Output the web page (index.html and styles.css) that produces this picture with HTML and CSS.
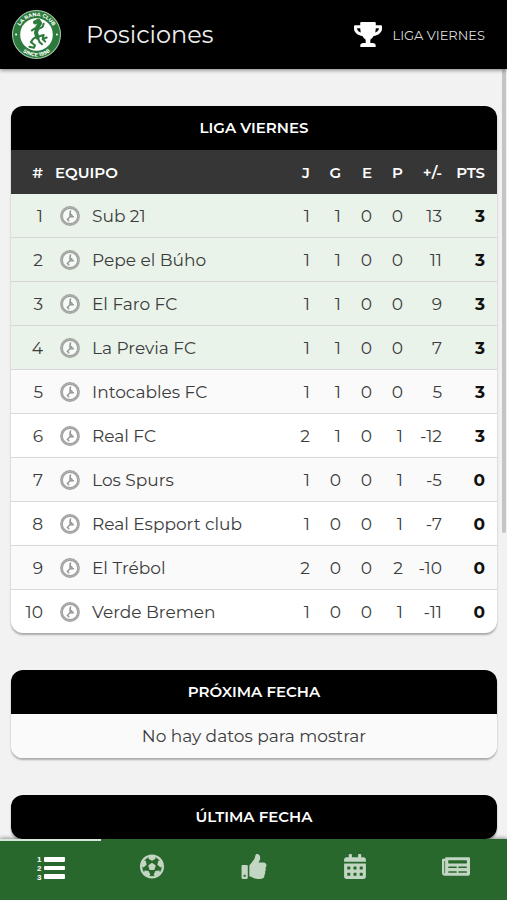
FILE: index.html
```html
<!DOCTYPE html>
<html lang="es">
<head>
<meta charset="utf-8">
<meta name="viewport" content="width=device-width, initial-scale=1">
<title>Posiciones</title>
<link rel="stylesheet" href="styles.css">
</head>
<body>
<header class="topbar">
  <svg class="crest" viewBox="0 0 100 100" aria-hidden="true">
    <defs>
      <path id="arc-top" d="M14 50a36 36 0 0 1 72 0"/>
      <path id="arc-bottom" d="M7 50a43 43 0 0 0 86 0"/>
    </defs>
    <circle cx="50" cy="50" r="47" fill="#2c7a3c" stroke="#a9cbb0" stroke-width="2"/>
    <circle cx="50" cy="50" r="32" fill="#fff"/>
    <text class="crest-text"><textPath href="#arc-top" startOffset="50%">LA RANA CLUB</textPath></text>
    <text class="crest-text"><textPath href="#arc-bottom" startOffset="50%">SINCE 1998</textPath></text>
    <circle cx="10" cy="50" r="2" fill="#fff"/><circle cx="90" cy="50" r="2" fill="#fff"/>
    <g fill="none" stroke="#2c7a3c" stroke-linecap="round" stroke-linejoin="round">
      <path d="M47 26l7-3 3 5-5 7-3 12 3 9" stroke-width="8"/>
      <path d="M47 38l-6 4M54 39l8-4 2-6M50 54l-7 5-4 6 8 6-2 5-9-2M54 54l10-3-2 8 8-3M62 59l5 5M53 57l3 8 5 4" stroke-width="4"/>
    </g>
  </svg>
  <h1 class="page-title">Posiciones</h1>
  <button class="league" type="button">
    <svg class="trophy" viewBox="0 0 576 512" aria-hidden="true"><path d="M552 64H448V24c0-13.300-10.700-24-24-24H152c-13.300 0-24 10.700-24 24v40H24C10.700 64 0 74.700 0 88v56c0 35.700 22.500 72.400 61.900 100.700 31.500 22.700 69.800 37.100 110 41.700C203.300 338.500 240 360 240 360v72h-48c-35.300 0-64 20.700-64 56v12c0 6.600 5.400 12 12 12h296c6.600 0 12-5.400 12-12v-12c0-35.300-28.700-56-64-56h-48v-72s36.700-21.500 68.100-73.600c40.300-4.600 78.600-19 110-41.700 39.300-28.300 61.900-65 61.900-100.700V88c0-13.300-10.700-24-24-24zM99.300 192.800C74.900 175.200 64 155.600 64 144v-16h64.200c1 32.600 5.800 61.200 12.800 86.200-15.100-5.200-29.200-12.400-41.700-21.400zM512 144c0 16.100-17.700 36.100-35.300 48.800-12.500 9-26.700 16.200-41.800 21.400 7-25 11.800-53.600 12.800-86.200H512v16z"/></svg>
    <span>LIGA VIERNES</span>
  </button>
</header>

<main class="content">
  <svg class="symbols" aria-hidden="true">
    <symbol id="badge" viewBox="0 0 20 20">
      <circle cx="10" cy="10" r="8.500" fill="#fff" fill-opacity=".6" stroke="#a0a2a0" stroke-width="2.800"/>
      <circle cx="10" cy="10" r="8.500" fill="none" stroke="#c0c2c0" stroke-width="1" stroke-dasharray="1 1"/>
      <path d="M10.500 5l-.6 2.600.3 2.700M10 10.500l3.400.3M10 10.800l-2.600 2.700 1.400 1.200M10.500 8l1.600 1.300" fill="none" stroke="#969896" stroke-width="1.500" stroke-linecap="round"/>
    </symbol>
  </svg>

  <section class="card">
    <h2 class="card-title">LIGA VIERNES</h2>
    <table class="standings">
      <thead>
        <tr><th class="pos">#</th><th class="team">EQUIPO</th><th class="num">J</th><th class="num">G</th><th class="num">E</th><th class="num">P</th><th class="diff">+/-</th><th class="pts">PTS</th></tr>
      </thead>
      <tbody>
        <tr class="qualified"><td>1</td><td class="team"><div class="club"><svg class="badge"><use href="#badge"/></svg>Sub 21</div></td><td>1</td><td>1</td><td>0</td><td>0</td><td>13</td><td class="pts">3</td></tr>
        <tr class="qualified"><td>2</td><td class="team"><div class="club"><svg class="badge"><use href="#badge"/></svg>Pepe el Búho</div></td><td>1</td><td>1</td><td>0</td><td>0</td><td>11</td><td class="pts">3</td></tr>
        <tr class="qualified"><td>3</td><td class="team"><div class="club"><svg class="badge"><use href="#badge"/></svg>El Faro FC</div></td><td>1</td><td>1</td><td>0</td><td>0</td><td>9</td><td class="pts">3</td></tr>
        <tr class="qualified"><td>4</td><td class="team"><div class="club"><svg class="badge"><use href="#badge"/></svg>La Previa FC</div></td><td>1</td><td>1</td><td>0</td><td>0</td><td>7</td><td class="pts">3</td></tr>
        <tr><td>5</td><td class="team"><div class="club"><svg class="badge"><use href="#badge"/></svg>Intocables FC</div></td><td>1</td><td>1</td><td>0</td><td>0</td><td>5</td><td class="pts">3</td></tr>
        <tr><td>6</td><td class="team"><div class="club"><svg class="badge"><use href="#badge"/></svg>Real FC</div></td><td>2</td><td>1</td><td>0</td><td>1</td><td>-12</td><td class="pts">3</td></tr>
        <tr><td>7</td><td class="team"><div class="club"><svg class="badge"><use href="#badge"/></svg>Los Spurs</div></td><td>1</td><td>0</td><td>0</td><td>1</td><td>-5</td><td class="pts">0</td></tr>
        <tr><td>8</td><td class="team"><div class="club"><svg class="badge"><use href="#badge"/></svg>Real Espport club</div></td><td>1</td><td>0</td><td>0</td><td>1</td><td>-7</td><td class="pts">0</td></tr>
        <tr><td>9</td><td class="team"><div class="club"><svg class="badge"><use href="#badge"/></svg>El Trébol</div></td><td>2</td><td>0</td><td>0</td><td>2</td><td>-10</td><td class="pts">0</td></tr>
        <tr><td>10</td><td class="team"><div class="club"><svg class="badge"><use href="#badge"/></svg>Verde Bremen</div></td><td>1</td><td>0</td><td>0</td><td>1</td><td>-11</td><td class="pts">0</td></tr>
      </tbody>
    </table>
  </section>

  <section class="card">
    <h2 class="card-title">PRÓXIMA FECHA</h2>
    <p class="empty">No hay datos para mostrar</p>
  </section>

  <section class="card">
    <h2 class="card-title">ÚLTIMA FECHA</h2>
  </section>
  <div class="scroll-thumb"></div>
</main>

<nav class="tabs">
  <a class="tab active" href="#posiciones" aria-label="Posiciones">
    <svg viewBox="0 0 28 26"><path d="M8 3h19a1 1 0 0 1 1 1v3a1 1 0 0 1-1 1H8a1 1 0 0 1-1-1V4a1 1 0 0 1 1-1zM8 12h19a1 1 0 0 1 1 1v2a1 1 0 0 1-1 1H8a1 1 0 0 1-1-1v-2a1 1 0 0 1 1-1zM8 20h19a1 1 0 0 1 1 1v3a1 1 0 0 1-1 1H8a1 1 0 0 1-1-1v-3a1 1 0 0 1 1-1z"/><text class="list-digit" x="0" y="8">1</text><text class="list-digit" x="0" y="17">2</text><text class="list-digit" x="0" y="26">3</text></svg>
  </a>
  <a class="tab" href="#partidos" aria-label="Partidos">
    <svg viewBox="-32 0 576 512"><path fill-rule="evenodd" d="M504 256c0 136.967-111.033 248-248 248S8 392.967 8 256 119.033 8 256 8s248 111.033 248 248zm-48 0l-.003-.282-26.064 22.741-62.679-58.500 16.454-84.355 34.303 3.072c-24.889-34.216-60.004-60.089-100.709-73.141l13.651 31.939L256 139l-74.953-41.525 13.651-31.939c-40.631 13.028-75.780 38.870-100.709 73.141l34.565-3.073 16.192 84.355-62.678 58.500-26.064-22.741-.003.282c0 43.015 13.497 83.952 38.472 117.991l7.704-33.897 85.138 10.447 36.301 77.826-29.902 17.786c40.202 13.122 84.290 13.148 124.572 0l-29.902-17.786 36.301-77.826 85.138-10.447 7.704 33.897C442.503 339.952 456 299.015 456 256zm-248.102 69.571l-29.894-91.312L256 177.732l77.996 56.527-29.622 91.312h-96.476z"/></svg>
  </a>
  <a class="tab" href="#destacados" aria-label="Destacados">
    <svg viewBox="-32 0 576 512"><path d="M104 224H24c-13.255 0-24 10.745-24 24v240c0 13.255 10.745 24 24 24h80c13.255 0 24-10.745 24-24V248c0-13.255-10.745-24-24-24zM64 472c-13.255 0-24-10.745-24-24s10.745-24 24-24 24 10.745 24 24-10.745 24-24 24zM384 81.452c0 42.416-25.970 66.208-33.277 94.548h101.723c33.397 0 59.397 27.746 59.553 58.098.084 17.938-7.546 37.249-19.439 49.197l-.110.110c9.836 23.337 8.237 56.037-9.308 79.469 8.681 25.895-.069 57.704-16.382 74.757 4.298 17.598 2.244 32.575-6.148 44.632C440.202 511.587 389.616 512 346.839 512l-2.845-.001c-48.287-.017-87.806-17.598-119.560-31.725-15.957-7.099-36.821-15.887-52.651-16.178-6.540-.120-11.783-5.457-11.783-11.998v-213.770c0-3.200 1.282-6.271 3.558-8.521 39.614-39.144 56.648-80.587 89.117-113.111 14.804-14.832 20.188-37.236 25.393-58.902C282.515 39.293 291.817 0 312 0c24 0 72 8 72 81.452z"/></svg>
  </a>
  <a class="tab" href="#calendario" aria-label="Calendario">
    <svg viewBox="-64 0 576 512"><path fill-rule="evenodd" d="M0 464c0 26.500 21.500 48 48 48h352c26.500 0 48-21.500 48-48V192H0v272zM400 64h-48V16c0-8.800-7.200-16-16-16h-32c-8.800 0-16 7.200-16 16v48H160V16c0-8.800-7.200-16-16-16h-32c-8.800 0-16 7.200-16 16v48H48C21.500 64 0 85.500 0 112v48h448v-48c0-26.500-21.500-48-48-48zM76 256h40a12 12 0 0 1 12 12v40a12 12 0 0 1-12 12H76a12 12 0 0 1-12-12v-40a12 12 0 0 1 12-12zM204 256h40a12 12 0 0 1 12 12v40a12 12 0 0 1-12 12h-40a12 12 0 0 1-12-12v-40a12 12 0 0 1 12-12zM332 256h40a12 12 0 0 1 12 12v40a12 12 0 0 1-12 12h-40a12 12 0 0 1-12-12v-40a12 12 0 0 1 12-12zM76 384h40a12 12 0 0 1 12 12v40a12 12 0 0 1-12 12H76a12 12 0 0 1-12-12v-40a12 12 0 0 1 12-12zM204 384h40a12 12 0 0 1 12 12v40a12 12 0 0 1-12 12h-40a12 12 0 0 1-12-12v-40a12 12 0 0 1 12-12zM332 384h40a12 12 0 0 1 12 12v40a12 12 0 0 1-12 12h-40a12 12 0 0 1-12-12v-40a12 12 0 0 1 12-12z"/></svg>
  </a>
  <a class="tab" href="#noticias" aria-label="Noticias">
    <svg viewBox="0 0 576 512"><path fill-rule="evenodd" d="M552 64H88c-13.255 0-24 10.745-24 24v8H24c-13.255 0-24 10.745-24 24v272c0 30.928 25.072 56 56 56h472c26.510 0 48-21.490 48-48V88c0-13.255-10.745-24-24-24zM56 400a8 8 0 0 1-8-8V144h16v248a8 8 0 0 1-8 8zM140 352h152a12 12 0 0 1 12 12v8a12 12 0 0 1-12 12H140a12 12 0 0 1-12-12v-8a12 12 0 0 1 12-12zM348 352h152a12 12 0 0 1 12 12v8a12 12 0 0 1-12 12H348a12 12 0 0 1-12-12v-8a12 12 0 0 1 12-12zM140 256h152a12 12 0 0 1 12 12v8a12 12 0 0 1-12 12H140a12 12 0 0 1-12-12v-8a12 12 0 0 1 12-12zM348 256h152a12 12 0 0 1 12 12v8a12 12 0 0 1-12 12H348a12 12 0 0 1-12-12v-8a12 12 0 0 1 12-12zM140 128h360a12 12 0 0 1 12 12v40a12 12 0 0 1-12 12H140a12 12 0 0 1-12-12v-40a12 12 0 0 1 12-12z"/></svg>
  </a>
</nav>
</body>
</html>
```
FILE: styles.css
```css
* {
  box-sizing: border-box;
}

body {
  margin: 0;
  height: 100vh;
  display: flex;
  flex-direction: column;
  background: #f2f2f2;
  color: #3c3c3c;
  font-family: Montserrat, Inter, "Open Sans", sans-serif;
  font-size: 17px;
}

.topbar {
  flex: none;
  display: flex;
  align-items: center;
  padding: 9px 22px 9px 11px;
  background: #000;
  color: #eee;
  box-shadow: 0 1px 4px rgba(0, 0, 0, .5);
  z-index: 1;
}

.crest {
  width: 51px;
  height: 51px;
}

.crest-text {
  fill: #fff;
  font-size: 10px;
  font-weight: 700;
  text-anchor: middle;
}

.page-title {
  margin: 0 auto 0 24px;
  font-size: 24px;
  font-weight: 400;
  line-height: 32px;
}

.league {
  display: flex;
  align-items: center;
  gap: 10px;
  padding: 0;
  border: 0;
  background: none;
  color: #ddd;
  font: inherit;
  font-size: 13px;
}

.trophy {
  width: 28px;
  height: 25px;
  fill: #fff;
}

.content {
  position: relative;
  flex: 1;
  min-height: 0;
  overflow: hidden;
  display: flex;
  flex-direction: column;
  gap: 37px;
  padding: 37px 10px 0 11px;
}

.symbols {
  position: absolute;
  width: 0;
  height: 0;
}

.card {
  flex: none;
  overflow: hidden;
  border-radius: 12px;
  background: #fff;
  box-shadow: 0 2px 2px rgba(0, 0, 0, .3);
}

.card-title {
  margin: 0;
  background: #000;
  color: #fff;
  font-size: 15px;
  font-weight: 600;
  line-height: 44px;
  text-align: center;
}

.standings {
  width: 100%;
  table-layout: fixed;
  border-collapse: separate;
  border-spacing: 0;
}

.standings th,
.standings td {
  height: 44px;
  padding: 0 12px 0 0;
  text-align: right;
  white-space: nowrap;
}

.standings th {
  background: #363636;
  color: #fff;
  font-size: 15px;
  font-weight: 600;
}

.standings td {
  border-bottom: 1px solid #d8d8d8;
}

.standings .pos {
  width: 44px;
}

.standings .num {
  width: 31px;
}

.standings .diff {
  width: 39px;
}

.standings .pts {
  width: 43px;
}

.standings td.pts {
  color: #111;
  font-weight: 700;
}

.standings .team {
  text-align: left;
}

.standings tbody tr:nth-child(odd) {
  background: #fafafa;
}

.standings tbody tr.qualified {
  background: #e9f3ea;
}

.standings tbody tr:last-child td {
  height: 43px;
  border-bottom: 0;
}

.club {
  display: flex;
  align-items: center;
  gap: 12px;
  padding-left: 5px;
}

.badge {
  width: 20px;
  height: 20px;
}

.empty {
  margin: 0;
  background: #fafafa;
  line-height: 44px;
  text-align: center;
}

.scroll-thumb {
  position: absolute;
  top: 0;
  right: 1px;
  width: 4px;
  height: 464px;
  border-radius: 2px;
  background: #c4c4c4;
}

.tabs {
  flex: none;
  display: flex;
  height: 61px;
  background: #29682c;
  box-shadow: 0 -1px 4px rgba(0, 0, 0, .4);
  z-index: 1;
}

.tab {
  flex: 1;
  display: flex;
  align-items: center;
  justify-content: center;
  padding-bottom: 8px;
  border-top: 2px solid transparent;
}

.tab svg {
  width: 28px;
  height: 25px;
  overflow: visible;
  fill: #c2d6c3;
}

.tab.active {
  border-top-color: #d9e6da;
}

.tab.active svg {
  height: 26px;
  fill: #fff;
}

.list-digit {
  font-family: "Liberation Sans", sans-serif;
  font-size: 8px;
  font-weight: 700;
}
```
